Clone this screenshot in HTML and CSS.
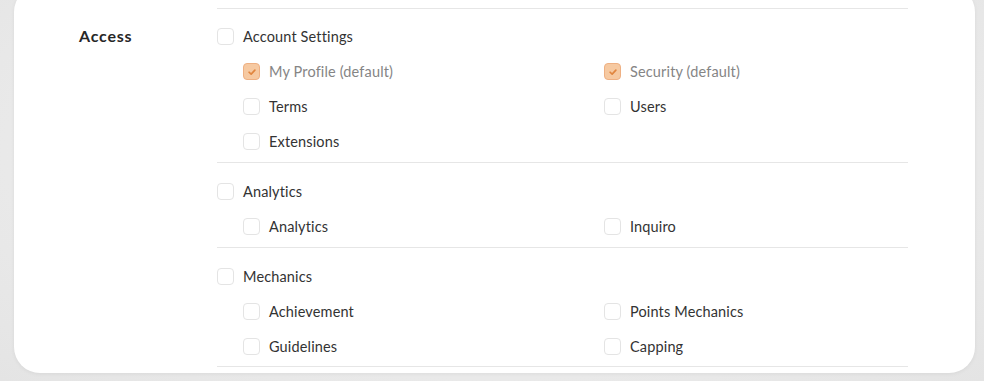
FILE: index.html
```html
<!DOCTYPE html>
<html>
<head>
<meta charset="utf-8">
<link rel="stylesheet" href="styles.css">
</head>
<body>
<div class="page">
  <div class="card">
    <div class="section">
      <div class="section-label">Access</div>
      <div class="section-body">
        <div class="top-divider"></div>
        <div class="group">
          <label class="row"><span class="box"></span><span class="text">Account Settings</span></label>
          <div class="subgrid">
            <label class="row"><span class="box checked"><svg viewBox="0 0 10 10"><path d="M2.6 5.2 L4.3 6.8 L7.4 3.4"/></svg></span><span class="text muted">My Profile (default)</span></label>
            <label class="row"><span class="box checked"><svg viewBox="0 0 10 10"><path d="M2.6 5.2 L4.3 6.8 L7.4 3.4"/></svg></span><span class="text muted">Security (default)</span></label>
            <label class="row"><span class="box"></span><span class="text">Terms</span></label>
            <label class="row"><span class="box"></span><span class="text">Users</span></label>
            <label class="row"><span class="box"></span><span class="text">Extensions</span></label>
          </div>
        </div>
        <div class="group">
          <label class="row"><span class="box"></span><span class="text">Analytics</span></label>
          <div class="subgrid">
            <label class="row"><span class="box"></span><span class="text">Analytics</span></label>
            <label class="row"><span class="box"></span><span class="text">Inquiro</span></label>
          </div>
        </div>
        <div class="group">
          <label class="row"><span class="box"></span><span class="text">Mechanics</span></label>
          <div class="subgrid">
            <label class="row"><span class="box"></span><span class="text">Achievement</span></label>
            <label class="row"><span class="box"></span><span class="text">Points Mechanics</span></label>
            <label class="row"><span class="box"></span><span class="text">Guidelines</span></label>
            <label class="row"><span class="box"></span><span class="text">Capping</span></label>
          </div>
        </div>
      </div>
    </div>
  </div>
</div>
</body>
</html>
```
FILE: styles.css
```css
* { box-sizing: border-box; }
html, body {
  margin: 0;
  height: 100%;
  overflow: hidden;
}
body {
  background: radial-gradient(ellipse at 50% 40%, #f1f1f1 0%, #e9e9e9 70%, #e4e4e4 100%);
  font-family: "Lato", "Open Sans", sans-serif;
  color: #333;
}
.page {
  padding: 0 9px 0 14px;
}
.card {
  margin-top: -14px;
  background: #fff;
  border-radius: 26px;
  padding: 22px 67px 0 65px;
  height: 387px;
  box-shadow: 0 1px 4px rgba(0,0,0,0.06);
}
.section {
  display: flex;
}
.section-label {
  width: 138px;
  flex: none;
  font-size: 16px;
  font-weight: 700;
  letter-spacing: 0.8px;
  color: #262626;
  padding-top: 18px;
}
.section-body {
  flex: 1;
}
.top-divider {
  height: 0;
  border-top: 1px solid #e6e6e6;
}
.group {
  padding: 11px 0 3px;
  border-top: 1px solid #e6e6e6;
}
.top-divider + .group {
  border-top: none;
  padding-top: 10px;
}
.group:last-child { border-bottom: 1px solid #e6e6e6; padding-bottom: 2px; }
.subgrid {
  display: grid;
  grid-template-columns: 361px 1fr;
  padding-left: 26px;
}
.row {
  display: flex;
  align-items: center;
  height: 35px;
  font-size: 14.5px;
  letter-spacing: 0.15px;
}
.box {
  width: 17px;
  height: 17px;
  border: 1px solid #e4e4e4;
  border-radius: 4px;
  background: #fff;
  flex: none;
  margin-right: 9px;
  display: flex;
  align-items: center;
  justify-content: center;
}
.box.checked {
  background: #f6c9a1;
  border-color: #eeb083;
}
.box svg {
  width: 12px;
  height: 12px;
  fill: none;
  stroke: #e0853f;
  stroke-width: 1.4;
  stroke-linecap: round;
  stroke-linejoin: round;
}
.text { white-space: nowrap; }
.text.muted { color: #858585; }
```
